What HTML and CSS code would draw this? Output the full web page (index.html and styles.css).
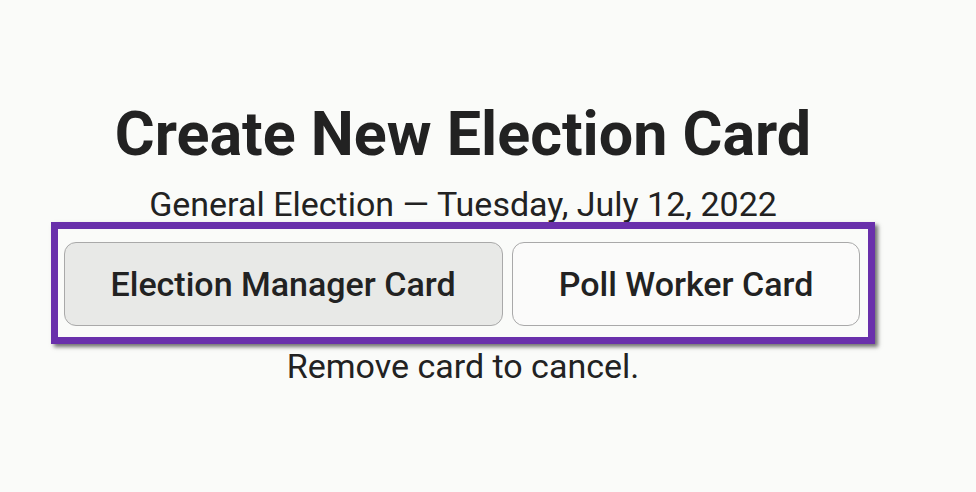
FILE: index.html
```html
<!DOCTYPE html>
<html lang="en">
<head>
    <meta charset="UTF-8">
    <meta name="viewport" content="width=device-width, initial-scale=1.0">
    <title>Create New Election Card</title>
    <link rel="stylesheet" href="styles.css">
</head>
<body>
    <main class="screen">
        <h1 class="title">Create New Election Card</h1>
        <p class="subtitle">General Election — Tuesday, July 12, 2022</p>
        <div class="card-choices">
            <button class="card-btn card-btn-selected">Election Manager Card</button>
            <button class="card-btn">Poll Worker Card</button>
        </div>
        <p class="hint">Remove card to cancel.</p>
    </main>
</body>
</html>
```

FILE: styles.css
```css
body {
    font-family: 'Roboto', 'Liberation Sans', sans-serif;
    display: flex;
    justify-content: center;
    align-items: center;
    min-height: 100vh;
    margin: 0;
    padding-right: 50px;
    box-sizing: border-box;
    background-color: #fafbf9;
    color: #222;
}

.screen {
    display: flex;
    flex-direction: column;
    align-items: center;
    margin-top: -8px;
}

.title {
    font-size: 61px;
    font-weight: 700;
    margin: 0 0 15px;
    line-height: 1.2;
}

.subtitle {
    font-size: 34px;
    margin: 0;
    line-height: 36px;
}

.card-choices {
    display: flex;
    gap: 9px;
    padding: 13px 8px 11px 6px;
    border: 7px solid #6930ab;
    box-shadow: 3px 3px 4px rgba(0, 0, 0, 0.55);
    margin-bottom: 2px;
}

.card-btn {
    font-family: inherit;
    font-size: 34px;
    font-weight: 500;
    color: #222;
    height: 84px;
    padding: 0 46px;
    background-color: #fbfbfa;
    border: 1.5px solid #a9a9a9;
    border-radius: 12px;
    cursor: pointer;
}

.card-btn-selected {
    background-color: #e8e9e7;
}

.hint {
    font-size: 34px;
    margin: 0;
    line-height: 40px;
}
```
